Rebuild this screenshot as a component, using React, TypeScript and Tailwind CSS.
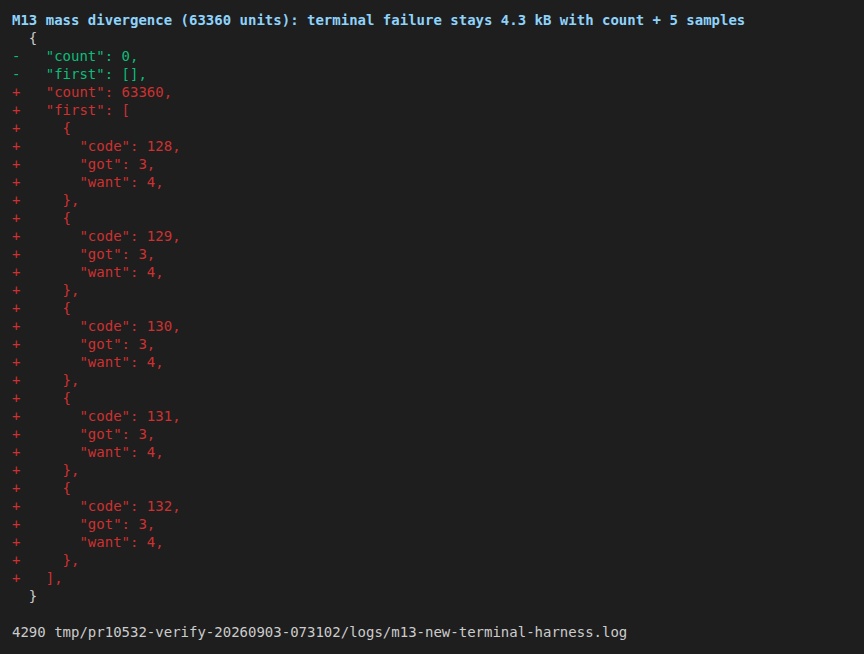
import React from 'react';

type Line = { kind: 'ctx' | 'del' | 'add'; text: string };

const codes = [128, 129, 130, 131, 132];

const lines: Line[] = [
  { kind: 'ctx', text: '  {' },
  { kind: 'del', text: '-   "count": 0,' },
  { kind: 'del', text: '-   "first": [],' },
  { kind: 'add', text: '+   "count": 63360,' },
  { kind: 'add', text: '+   "first": [' },
  ...codes.flatMap((c) => [
    { kind: 'add' as const, text: '+     {' },
    { kind: 'add' as const, text: `+       "code": ${c},` },
    { kind: 'add' as const, text: '+       "got": 3,' },
    { kind: 'add' as const, text: '+       "want": 4,' },
    { kind: 'add' as const, text: '+     },' },
  ]),
  { kind: 'add', text: '+   ],' },
  { kind: 'ctx', text: '  }' },
];

const color = {
  ctx: 'text-[#cccccc]',
  del: 'text-[#0dbc79]',
  add: 'text-[#cd3131]',
};

const App: React.FC = () => {
  return (
    <div className="min-h-[654px] w-full bg-[#1e1e1e] px-3 pt-[11px] font-['DejaVu_Sans_Mono',monospace] text-[14px] leading-[18px]">
      <div className="whitespace-pre font-bold text-[#8fd3fb]">
        M13 mass divergence (63360 units): terminal failure stays 4.3 kB with count + 5 samples
      </div>
      {lines.map((l, i) => (
        <div key={i} className={`whitespace-pre ${color[l.kind]}`}>
          {l.text}
        </div>
      ))}
      <div className="mt-[18px] whitespace-pre text-[#cccccc]">
        4290 tmp/pr10532-verify-20260903-073102/logs/m13-new-terminal-harness.log
      </div>
    </div>
  );
};

export default App;
